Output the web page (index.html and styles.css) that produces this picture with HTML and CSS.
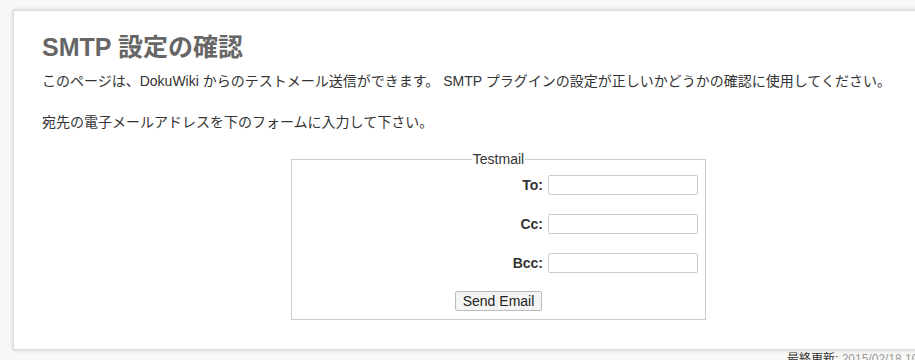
FILE: index.html
```html
<!DOCTYPE html>
<html lang="ja">
	<head>
		<meta charset="utf-8">
		<title>SMTP 設定の確認</title>
		<link rel="stylesheet" href="styles.css">
	</head>
	<body>
		<div class="page">
			<h1>SMTP 設定の確認</h1>
			<p>このページは、DokuWiki からのテストメール送信ができます。 SMTP プラグインの設定が正しいかどうかの確認に使用してください。</p>
			<p class="last">宛先の電子メールアドレスを下のフォームに入力して下さい。</p>
			<form class="testmail" action="#">
				<fieldset>
					<legend>Testmail</legend>
					<div class="row">
						<label for="to">To:</label>
						<input type="text" id="to" name="to">
					</div>
					<div class="row">
						<label for="cc">Cc:</label>
						<input type="text" id="cc" name="cc">
					</div>
					<div class="row">
						<label for="bcc">Bcc:</label>
						<input type="text" id="bcc" name="bcc">
					</div>
					<div class="buttons">
						<button type="button">Send Email</button>
					</div>
				</fieldset>
			</form>
		</div>
		<div class="docInfo">最終更新: <span class="date">2015/02/18 10:40</span></div>
	</body>
</html>
```

FILE: styles.css
```css
body {
	margin: 0;
	padding: 10px 0 0 13px;
	background-color: #f9f8f6;
	font-family: "Liberation Sans", "Noto Sans CJK JP", sans-serif;
	font-size: 14px;
	color: #333;
	overflow: hidden;
	height: 350px;
}

.page {
	width: 914px;
	height: 340px;
	box-sizing: border-box;
	padding: 21px 28px 0 28px;
	background-color: #fff;
	border: 1px solid #ddd;
	box-shadow: 0 0 4px #ccc;
}

h1 {
	margin: 0 0 9px 0;
	font-size: 25px;
	line-height: 30px;
	font-weight: bold;
	color: #666;
}

p {
	margin: 0 0 21px 0;
	line-height: 20px;
}

p.last {
	margin-bottom: 19px;
}

.testmail {
	width: 415px;
	margin: 0 auto 0 249px;
}

fieldset {
	margin: 0;
	padding: 8px 7px 8px 7px;
	border: 1px solid #ccc;
	text-align: center;
}

legend {
	padding: 0 1px;
	font-size: 14px;
	line-height: 16px;
}

.row {
	display: flex;
	align-items: center;
	justify-content: flex-end;
	gap: 5px;
	margin-bottom: 19px;
}

.row label {
	font-weight: bold;
}

.row input {
	width: 150px;
	height: 20px;
	box-sizing: border-box;
	margin: 0;
	padding: 1px 3px;
	border: 1px solid #ccc;
	border-radius: 2px;
}

.buttons {
	margin-top: -1px;
}

button {
	font-family: "Liberation Sans", sans-serif;
	font-size: 14px;
	color: #222;
	height: 20px;
	padding: 0 7px;
	background-color: #f4f4f4;
	border: 1px solid #bbb;
	border-radius: 2px;
}

.docInfo {
	margin: 2px 0 0 774px;
	font-size: 12px;
	line-height: 14px;
	color: #333;
	white-space: nowrap;
}

.docInfo .date {
	color: #999;
}
```
